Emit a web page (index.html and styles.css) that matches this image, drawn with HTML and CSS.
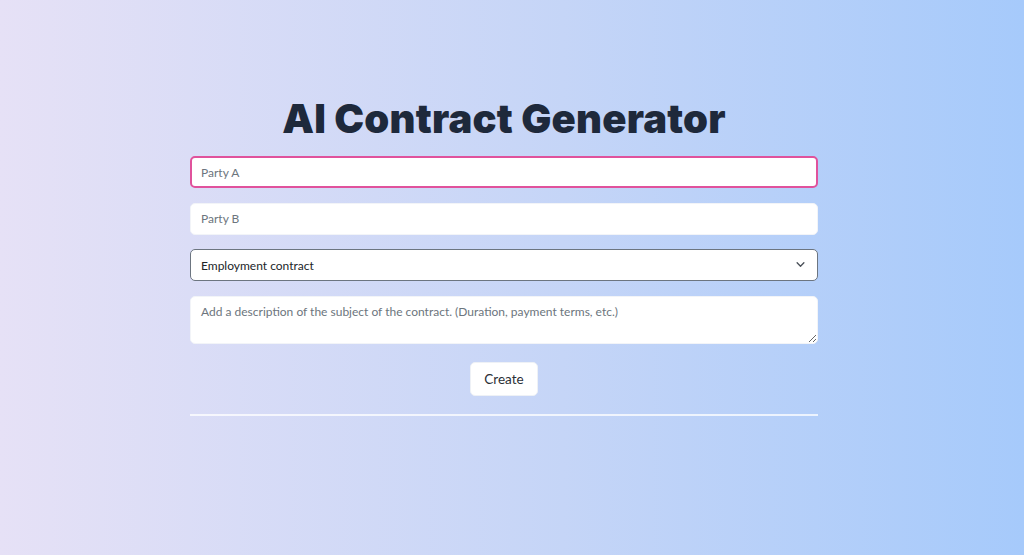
FILE: index.html
```html
<!DOCTYPE html>
<html lang="en">
<head>
    <meta charset="UTF-8">
    <meta name="viewport" content="width=device-width, initial-scale=1.0">
    <title>AI Contract Generator</title>
    <link rel="stylesheet" href="styles.css">
</head>
<body>
    <main class="page">
        <h1 class="title">AI Contract Generator</h1>
        <form class="contract-form">
            <input class="field field-focus" type="text" placeholder="Party A">
            <input class="field" type="text" placeholder="Party B">
            <div class="select-wrap">
                <select class="field field-select">
                    <option>Employment contract</option>
                    <option>Rental contract</option>
                    <option>Service contract</option>
                </select>
                <svg class="chevron" width="9" height="9" viewBox="0 0 16 16" fill="none" stroke="#4b5159" stroke-width="2.4" stroke-linecap="round" stroke-linejoin="round"><path d="M2 5l6 6 6-6"/></svg>
            </div>
            <textarea class="field field-area" placeholder="Add a description of the subject of the contract. (Duration, payment terms, etc.)"></textarea>
            <div class="actions">
                <button type="button" class="create-btn">Create</button>
            </div>
        </form>
        <hr class="divider">
    </main>
</body>
</html>
```

FILE: styles.css
```css
html, body {
    height: 100%;
}
body {
    margin: 0;
    padding: 0 16px 0 0;
    font-family: Lato, "Open Sans", sans-serif;
    background: linear-gradient(to right, #e6e1f6, #c5d5f7 55%, #a6cafb);
    color: #1e293b;
}
.page {
    width: 628px;
    margin: 0 auto;
    padding-top: 94px;
}
.title {
    margin: 0 0 12px;
    text-align: center;
    font-family: Inter, "DejaVu Sans", sans-serif;
    font-weight: 900;
    font-size: 40px;
    line-height: 50px;
    letter-spacing: 0.2px;
    color: #1e293b;
}
.contract-form {
    display: flex;
    flex-direction: column;
    gap: 14.5px;
}
.field {
    box-sizing: border-box;
    width: 100%;
    height: 32px;
    padding: 0 10px;
    border: 1px solid #f2f4f8;
    border-radius: 5px;
    background: #fff;
    font-family: inherit;
    font-size: 12px;
    color: #212529;
    outline: none;
}
.field::placeholder {
    color: #6c757d;
}
.field-focus {
    border: 2px solid #e0529c;
    padding-left: 9px;
}
.select-wrap {
    position: relative;
}
.field-select {
    appearance: none;
    -webkit-appearance: none;
    border-color: #6c7580;
    cursor: pointer;
}
.chevron {
    position: absolute;
    right: 13px;
    top: 11px;
    pointer-events: none;
}
.field-area {
    height: 48px;
    padding: 6px 10px;
    resize: vertical;
    line-height: 1.5;
}
.actions {
    display: flex;
    justify-content: center;
    padding-top: 4px;
}
.create-btn {
    height: 34px;
    padding: 0 13px;
    border: 1px solid #eef1f6;
    border-radius: 5px;
    background: #fff;
    font-family: inherit;
    font-size: 13.5px;
    color: #2b2f36;
    cursor: pointer;
}
.divider {
    margin: 18px 0 0;
    border: 0;
    border-top: 2px solid rgba(255, 255, 255, 0.75);
}
```
